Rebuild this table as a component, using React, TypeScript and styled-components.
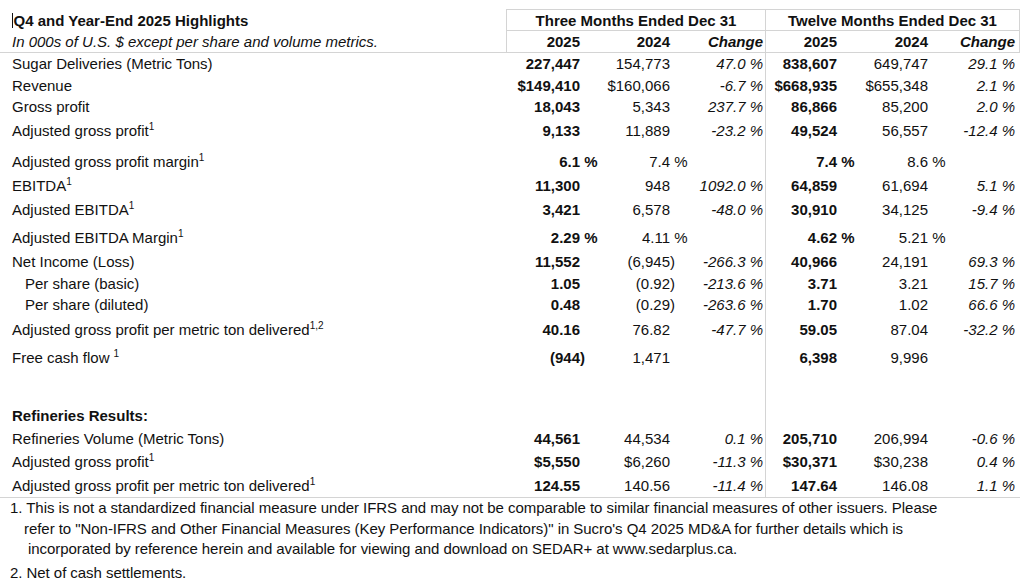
import styled, { createGlobalStyle } from 'styled-components';

const GlobalStyle = createGlobalStyle`
  html, body {
    margin: 0;
    padding: 0;
    background: #ffffff;
  }
  body {
    font-family: "Liberation Sans", Arial, sans-serif;
    color: #111111;
  }
`;

const RULE = '1px solid #d4d4d4';
const COLS = '506px 78px 90px 91px 76px 91px 88px';

const Page = styled.div`
  width: 1024px;
  height: 585px;
  overflow: hidden;
  box-sizing: border-box;
  padding-top: 9px;
  font-size: 15px;
`;

const Table = styled.div`
  width: 1020px;
`;

const HeadRow = styled.div<{ $h: number; $rule?: boolean }>`
  display: grid;
  grid-template-columns: ${COLS};
  height: ${p => p.$h}px;
  border-bottom: ${p => (p.$rule ? RULE : 'none')};
`;

const Title = styled.div`
  display: flex;
  align-items: center;
  padding-left: 12px;
  font-weight: 700;
`;

const Caret = styled.span`
  display: inline-block;
  width: 1px;
  height: 15px;
  background: #111;
  margin-right: 0.5px;
`;

const Subtitle = styled.div`
  display: flex;
  align-items: center;
  padding-left: 12px;
  font-style: italic;
`;

const Group = styled.div<{ $last?: boolean }>`
  grid-column: span 3;
  display: flex;
  align-items: center;
  justify-content: center;
  font-weight: 700;
  border-top: ${RULE};
  border-left: ${RULE};
  border-right: ${p => (p.$last ? RULE : 'none')};
  border-bottom: ${RULE};
`;

const HeadCell = styled.div<{ $pr: number; $split?: boolean; $end?: boolean; $italic?: boolean }>`
  display: flex;
  align-items: center;
  justify-content: flex-end;
  padding-right: ${p => p.$pr}px;
  font-weight: 700;
  font-style: ${p => (p.$italic ? 'italic' : 'normal')};
  border-left: ${p => (p.$split ? RULE : 'none')};
  border-right: ${p => (p.$end ? RULE : 'none')};
`;

const Row = styled.div<{ $h: number; $rule?: boolean }>`
  display: grid;
  grid-template-columns: ${COLS};
  height: ${p => p.$h}px;
  align-items: stretch;
  border-bottom: ${p => (p.$rule ? RULE : 'none')};
`;

const Label = styled.div<{ $indent?: number; $bold?: boolean }>`
  display: flex;
  align-items: flex-end;
  padding-left: ${p => 12 + (p.$indent || 0)}px;
  white-space: nowrap;
  font-weight: ${p => (p.$bold ? 700 : 400)};
`;

const LabelText = styled.span`
  line-height: 22px;
`;

const Sup = styled.sup<{ $gap?: boolean }>`
  font-size: 10px;
  line-height: 0;
  vertical-align: 6px;
  margin-left: ${p => (p.$gap ? '4px' : '0')};
`;

const Num = styled.div<{ $kind: 'cur' | 'prior' | 'chg'; $pr: number; $split?: boolean }>`
  display: flex;
  align-items: flex-end;
  justify-content: flex-end;
  padding-right: ${p => p.$pr}px;
  line-height: 22px;
  white-space: nowrap;
  font-weight: ${p => (p.$kind === 'cur' ? 700 : 400)};
  font-style: ${p => (p.$kind === 'chg' ? 'italic' : 'normal')};
  border-left: ${p => (p.$split ? RULE : 'none')};
`;

const Hang = styled.span`
  display: inline-block;
  width: 0;
  white-space: pre;
`;

const Notes = styled.div`
  font-size: 15px;
  letter-spacing: -0.05px;
`;

const NoteLine = styled.div<{ $indent: number; $gap?: number }>`
  line-height: 20.5px;
  padding-left: ${p => p.$indent}px;
  margin-top: ${p => p.$gap || 0}px;
  white-space: nowrap;
`;

type RowData = {
  label: string;
  sup?: string;
  supGap?: boolean;
  indent?: number;
  bold?: boolean;
  h: number;
  vals: string[];
  rule?: boolean;
};

const kinds: ('cur' | 'prior' | 'chg')[] = ['cur', 'prior', 'chg', 'cur', 'prior', 'chg'];
const pads = [4, 4, 2, 4, 4, 5];
const empty = ['', '', '', '', '', ''];

const rows: RowData[] = [
  { label: 'Sugar Deliveries (Metric Tons)', h: 22, vals: ['227,447', '154,773', '47.0 %', '838,607', '649,747', '29.1 %'] },
  { label: 'Revenue', h: 21, vals: ['$149,410', '$160,066', '-6.7 %', '$668,935', '$655,348', '2.1 %'] },
  { label: 'Gross profit', h: 22, vals: ['18,043', '5,343', '237.7 %', '86,866', '85,200', '2.0 %'] },
  { label: 'Adjusted gross profit', sup: '1', h: 24, vals: ['9,133', '11,889', '-23.2 %', '49,524', '56,557', '-12.4 %'] },
  { label: 'Adjusted gross profit margin', sup: '1', h: 31, vals: ['6.1| %', '7.4| %', '', '7.4| %', '8.6| %', ''] },
  { label: 'EBITDA', sup: '1', h: 24, vals: ['11,300', '948', '1092.0 %', '64,859', '61,694', '5.1 %'] },
  { label: 'Adjusted EBITDA', sup: '1', h: 24, vals: ['3,421', '6,578', '-48.0 %', '30,910', '34,125', '-9.4 %'] },
  { label: 'Adjusted EBITDA Margin', sup: '1', h: 28, vals: ['2.29| %', '4.11| %', '', '4.62| %', '5.21| %', ''] },
  { label: 'Net Income (Loss)', h: 24, vals: ['11,552', '(6,945|)', '-266.3 %', '40,966', '24,191', '69.3 %'] },
  { label: 'Per share (basic)', indent: 13, h: 21, vals: ['1.05', '(0.92|)', '-213.6 %', '3.71', '3.21', '15.7 %'] },
  { label: 'Per share (diluted)', indent: 13, h: 22, vals: ['0.48', '(0.29|)', '-263.6 %', '1.70', '1.02', '66.6 %'] },
  { label: 'Adjusted gross profit per metric ton delivered', sup: '1,2', h: 25, vals: ['40.16', '76.82', '-47.7 %', '59.05', '87.04', '-32.2 %'] },
  { label: 'Free cash flow', sup: '1', supGap: true, h: 28, vals: ['(944|)', '1,471', '', '6,398', '9,996', ''] },
  { label: '', h: 35, vals: empty },
  { label: 'Refineries Results:', bold: true, h: 23, vals: empty },
  { label: 'Refineries Volume (Metric Tons)', h: 23, vals: ['44,561', '44,534', '0.1 %', '205,710', '206,994', '-0.6 %'] },
  { label: 'Adjusted gross profit', sup: '1', h: 23, vals: ['$5,550', '$6,260', '-11.3 %', '$30,371', '$30,238', '0.4 %'] },
  { label: 'Adjusted gross profit per metric ton delivered', sup: '1', h: 24, rule: true, vals: ['124.55', '140.56', '-11.4 %', '147.64', '146.08', '1.1 %'] },
];

const renderValue = (v: string) => {
  const [main, tail] = v.split('|');
  return (
    <>
      {main}
      {tail !== undefined && <Hang>{tail}</Hang>}
    </>
  );
};

const App = () => {
  return (
    <Page>
      <GlobalStyle />
      <Table>
        <HeadRow $h={22}>
          <Title>
            <Caret />
            Q4 and Year-End 2025 Highlights
          </Title>
          <Group>Three Months Ended Dec 31</Group>
          <Group $last>Twelve Months Ended Dec 31</Group>
        </HeadRow>
        <HeadRow $h={21} $rule>
          <Subtitle>In 000s of U.S. $ except per share and volume metrics.</Subtitle>
          <HeadCell $pr={4} $split>2025</HeadCell>
          <HeadCell $pr={4}>2024</HeadCell>
          <HeadCell $pr={2} $italic>Change</HeadCell>
          <HeadCell $pr={4} $split>2025</HeadCell>
          <HeadCell $pr={4}>2024</HeadCell>
          <HeadCell $pr={4} $italic $end>Change</HeadCell>
        </HeadRow>

        {rows.map((r, idx) => (
          <Row key={idx} $h={r.h} $rule={r.rule}>
            <Label $indent={r.indent} $bold={r.bold}>
              <LabelText>
                {r.label}
                {r.sup && <Sup $gap={r.supGap}>{r.sup}</Sup>}
              </LabelText>
            </Label>
            {r.vals.map((v, i) => (
              <Num key={i} $kind={kinds[i]} $pr={pads[i]} $split={i === 3}>
                {renderValue(v)}
              </Num>
            ))}
          </Row>
        ))}
      </Table>

      <Notes>
        <NoteLine $indent={10}>
          1. This is not a standardized financial measure under IFRS and may not be comparable to similar financial measures of other issuers. Please
        </NoteLine>
        <NoteLine $indent={24}>
          refer to "Non-IFRS and Other Financial Measures (Key Performance Indicators)" in Sucro's Q4 2025 MD&amp;A for further details which is
        </NoteLine>
        <NoteLine $indent={28}>
          incorporated by reference herein and available for viewing and download on SEDAR+ at www.sedarplus.ca.
        </NoteLine>
        <NoteLine $indent={10} $gap={3}>
          2. Net of cash settlements.
        </NoteLine>
      </Notes>
    </Page>
  );
};

export default App;
